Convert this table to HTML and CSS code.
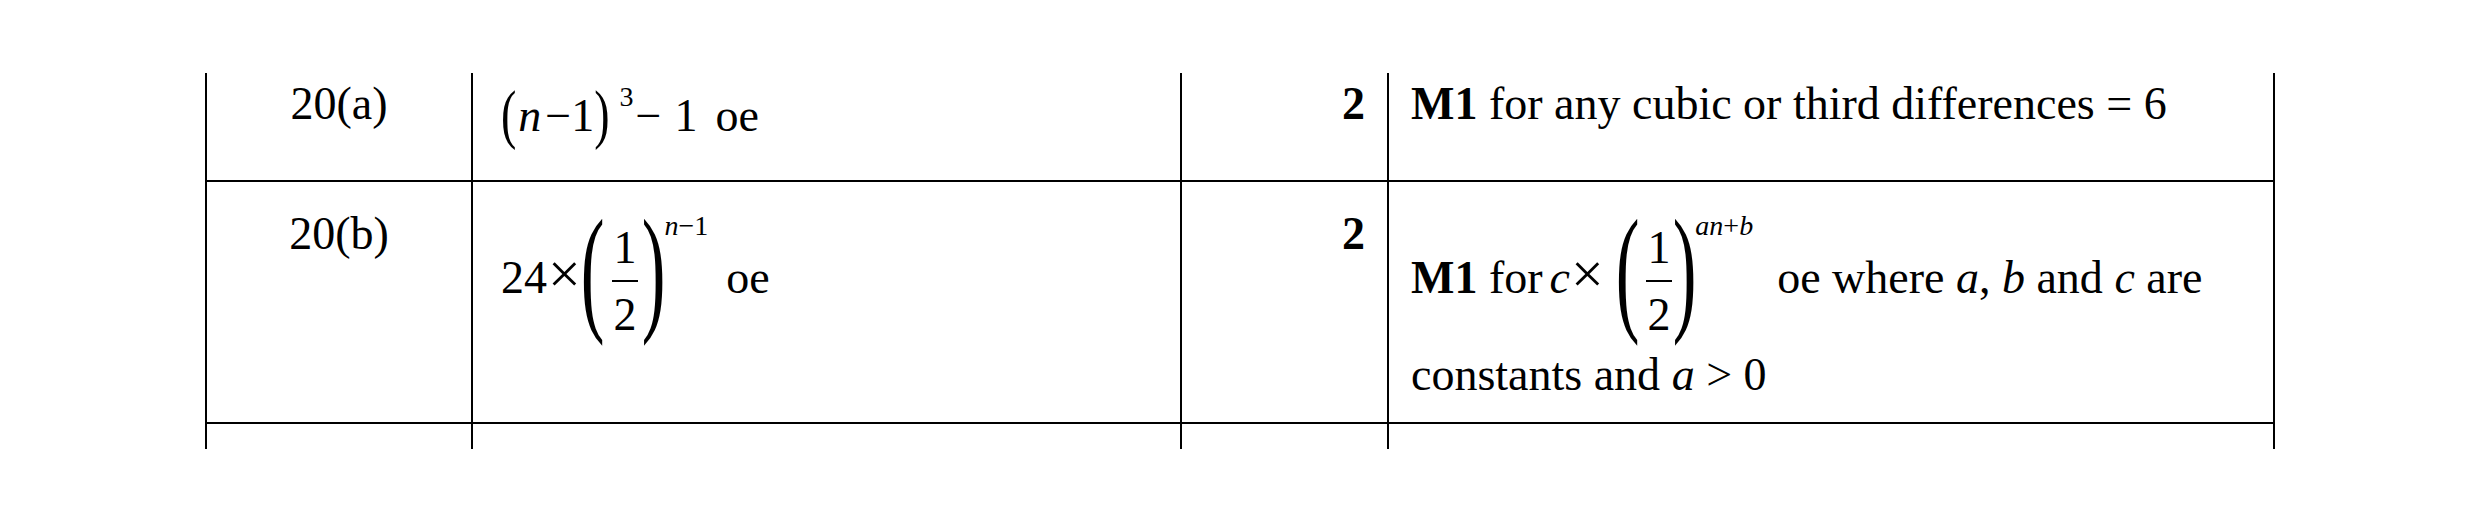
FILE: index.html
```html
<!DOCTYPE html>
<html lang="en">
<head>
<meta charset="utf-8">
<title>Mark scheme</title>
<link rel="stylesheet" href="styles.css">
</head>
<body>
<div class="sheet">
  <div class="row r1">
    <div class="cell c1">20(a)</div>
    <div class="cell c2 eq1"><span class="bp-sm">(</span><i class="n1">n</i><span class="m1">−</span>1<span class="bp-sm">)</span><span class="sup3">3</span><span class="m2">−</span><span class="one2">1</span><span class="oe1">oe</span></div>
    <div class="cell c3"><b>2</b></div>
    <div class="cell c4"><b>M1</b> for any cubic or third differences = 6</div>
  </div>
  <div class="row r2">
    <div class="cell c1 top">20(b)</div>
    <div class="cell c2 mathcell">24<span class="times">×</span><span class="bp bp-a">(</span><span class="frac frac-a"><span class="num">1</span><span class="bar"></span><span class="den">2</span></span><span class="bp">)</span><span class="sup"><i>n</i>−1</span><span class="oe2">oe</span></div>
    <div class="cell c3 top"><b>2</b></div>
    <div class="cell c4 mathcell"><b>M1</b> for<i class="cv">c</i><span class="times">×</span><span class="bp bp-b">(</span><span class="frac frac-b"><span class="num">1</span><span class="bar"></span><span class="den">2</span></span><span class="bp">)</span><span class="sup"><i>an</i>+<i>b</i></span><span class="oe3">oe where <i>a</i>, <i>b</i> and <i>c</i> are</span> constants and <i>a</i> &gt; 0</div>
  </div>
  <div class="row r3">
    <div class="cell c1"></div>
    <div class="cell c2"></div>
    <div class="cell c3"></div>
    <div class="cell c4"></div>
  </div>
</div>
</body>
</html>
```

FILE: styles.css
```css
* { box-sizing: border-box; }

body {
  margin: 0;
  background: #fff;
  color: #000;
  font-family: "Liberation Serif", "Times New Roman", serif;
}

.sheet {
  margin: 73px 0 0 205px;
  width: 2070px;
  height: 376px;
  overflow: hidden;
}

.row {
  display: grid;
  grid-template-columns: 266px 709px 207px 888px;
  border-bottom: 2px solid #000;
}

.r1 { height: 109px; }
.r2 { height: 242px; }
.r3 { height: 80px; border-bottom: none; }

.cell {
  border-left: 2px solid #000;
  font-family: "Liberation Serif", "Times New Roman", serif;
  font-size: 46px;
  line-height: 1.15;
  padding: 5px 22px 0 22px;
  white-space: nowrap;
}

.c4 { border-right: 2px solid #000; white-space: normal; }
.c1 { text-align: center; }
.c3 { text-align: right; padding-right: 22px; }
.c2 { padding-left: 28px; }

.r1 .cell.eq1 { padding-top: 17px; }
.r2 .cell.top { padding-top: 26px; }
.r2 .cell.mathcell { padding-top: 43px; }

/* row 1 equation */
.bp-sm {
  display: inline-block;
  line-height: 46px;
  transform: scaleY(1.42);
  transform-origin: 50% 27px;
}
.n1 { margin-left: 2px; }
.m1 { margin-left: 4px; }
.sup3 {
  font-size: 28px;
  line-height: 0;
  vertical-align: 25px;
  margin-left: 10px;
}
.m2 { margin-left: 2px; }
.one2 { margin-left: 13px; }
.oe1 { margin-left: 18px; }

/* row 2 equations */
.times {
  font-size: 58px;
  line-height: 0;
  margin: 0 1px;
}

.bp {
  display: inline-block;
  line-height: 46px;
  transform: scale(1.55, 3.05);
  transform-origin: 50% 27px;
}
.bp-a { margin-left: 3px; }
.bp-b { margin-left: 15px; }

.frac {
  display: inline-flex;
  flex-direction: column;
  align-items: center;
  vertical-align: 30px;
  padding-bottom: 11px;
  line-height: 46px;
}
.frac-a { margin: 0 8px 0 12px; }
.frac-b { margin: 0 5px 0 11px; }

.num, .den { display: block; line-height: 46px; }
.bar {
  display: block;
  width: 26px;
  height: 2px;
  background: #000;
  margin: 9px 0 10px;
}

.sup {
  font-size: 28px;
  line-height: 0;
  vertical-align: 58px;
  margin-left: 3px;
}

.cv { margin-left: 7px; }
.oe2 { margin-left: 18px; }
.oe3 { margin-left: 24px; }
```
